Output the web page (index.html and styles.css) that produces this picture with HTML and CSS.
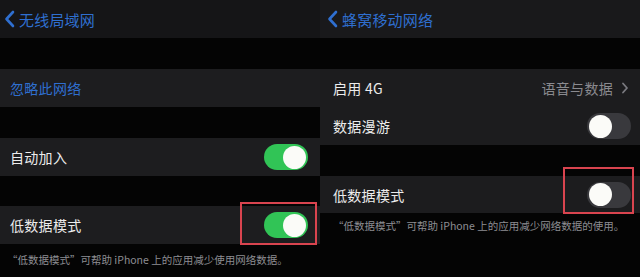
FILE: index.html
```html
<!DOCTYPE html>
<html lang="zh-CN">
<head>
    <meta charset="UTF-8">
    <meta name="viewport" content="width=device-width, initial-scale=1.0">
    <title>低数据模式</title>
    <link rel="stylesheet" href="styles.css">
</head>
<body>
    <div class="screens">
        <div class="screen screen-wifi">
            <div class="nav">
                <svg class="back" width="11" height="18" viewBox="0 0 11 18"><path d="M9 2 L2.5 9 L9 16" fill="none" stroke="#2f6fd0" stroke-width="2.6" stroke-linecap="round" stroke-linejoin="round"/></svg>
                <span class="nav-title">无线局域网</span>
            </div>
            <div class="gap"></div>
            <div class="row"><span class="link">忽略此网络</span></div>
            <div class="gap"></div>
            <div class="row">
                <span class="label">自动加入</span>
                <span class="switch on"><span class="knob"></span></span>
            </div>
            <div class="gap gap-short"></div>
            <div class="row row-marked">
                <span class="label">低数据模式</span>
                <span class="switch on"><span class="knob"></span></span>
                <span class="mark mark-left"></span>
            </div>
            <p class="note">“低数据模式”可帮助 iPhone 上的应用减少使用网络数据。</p>
        </div>
        <div class="screen screen-cell">
            <div class="nav">
                <svg class="back" width="11" height="18" viewBox="0 0 11 18"><path d="M9 2 L2.5 9 L9 16" fill="none" stroke="#2f6fd0" stroke-width="2.6" stroke-linecap="round" stroke-linejoin="round"/></svg>
                <span class="nav-title">蜂窝移动网络</span>
            </div>
            <div class="gap"></div>
            <div class="row">
                <span class="label">启用 4G</span>
                <span class="detail">语音与数据<svg class="more" width="8" height="12" viewBox="0 0 8 12"><path d="M2 1.5 L6 6 L2 10.5" fill="none" stroke="#7a7a80" stroke-width="1.8" stroke-linecap="round" stroke-linejoin="round"/></svg></span>
            </div>
            <div class="row">
                <span class="label">数据漫游</span>
                <span class="switch"><span class="knob"></span></span>
            </div>
            <div class="gap"></div>
            <div class="row row-marked row-short">
                <span class="label">低数据模式</span>
                <span class="switch"><span class="knob"></span></span>
                <span class="mark mark-right"></span>
            </div>
            <p class="note">“低数据模式”可帮助 iPhone 上的应用减少网络数据的使用。</p>
        </div>
    </div>
</body>
</html>
```

FILE: styles.css
```css
*{
    margin: 0;
    padding: 0;
    box-sizing: border-box;
}
body{
    background: #040404;
    font-family: "Noto Sans CJK SC", "Noto Sans", sans-serif;
    color: #ececec;
    width: 640px;
    height: 277px;
    overflow: hidden;
}
.screens{
    display: flex;
    height: 277px;
}
.screen{
    width: 320px;
    display: flex;
    flex-direction: column;
}
.nav{
    height: 38px;
    background: #151517;
    display: flex;
    align-items: center;
    padding-left: 4px;
}
.screen-cell .nav{
    background: #19191b;
    padding-left: 7px;
}
.back{
    display: block;
    margin-right: 4px;
}
.nav-title{
    color: #2f6fd0;
    font-size: 15px;
    letter-spacing: 0.2px;
}
.gap{
    height: 31px;
}
.gap-short{
    height: 30px;
}
.row{
    height: 38px;
    background: #1d1d1f;
    display: flex;
    align-items: center;
    justify-content: space-between;
    padding: 0 12px 0 10px;
    position: relative;
}
.screen-cell .row{
    background: #1c1c1e;
    padding: 0 9px 0 13px;
}
.screen-cell .row-short{
    height: 37px;
}
.label{
    font-size: 14px;
    letter-spacing: 0.3px;
}
.link{
    font-size: 14px;
    color: #2f6fd0;
    letter-spacing: 0.3px;
}
.detail{
    display: flex;
    align-items: center;
    gap: 8px;
    font-size: 14px;
    color: #8a8a8f;
    letter-spacing: 0.3px;
}
.more{
    display: block;
    margin-right: 2px;
}
.switch{
    width: 44px;
    height: 26px;
    border-radius: 13px;
    background: #39393d;
    display: flex;
    align-items: center;
    padding: 0 2px;
}
.switch.on{
    background: #31c456;
    justify-content: flex-end;
}
.knob{
    width: 23px;
    height: 23px;
    border-radius: 50%;
    background: #fbfbf8;
}
.note{
    font-size: 10.5px;
    color: #8d8d92;
    padding: 8px 0 0 7px;
    letter-spacing: 0;
}
.screen-cell .note{
    padding: 5px 0 0 13px;
}
/* red highlight boxes drawn on top of the screenshot */
.mark{
    position: absolute;
    border: 2px solid #d9444f;
}
.mark-left{
    left: 240px;
    width: 77px;
    top: -4px;
    height: 43px;
}
.mark-right{
    left: 243px;
    width: 71px;
    top: -9px;
    height: 47px;
}
```
